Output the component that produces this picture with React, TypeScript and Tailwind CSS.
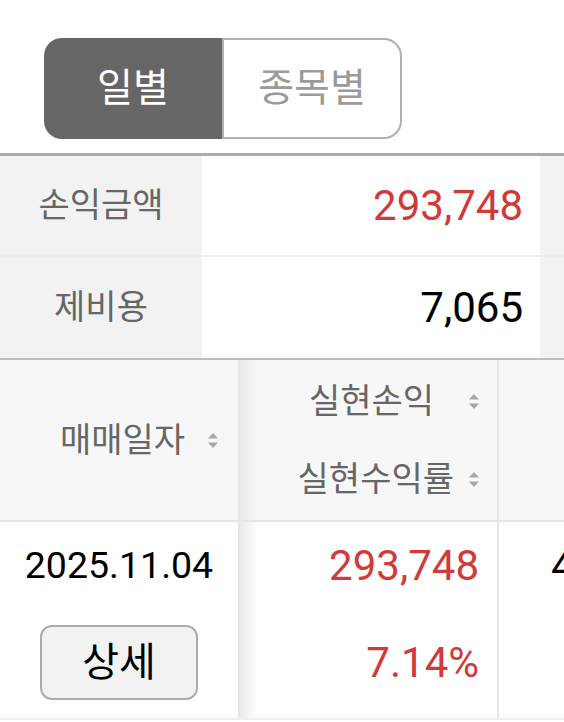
const font = { fontFamily: "Roboto, 'Noto Sans CJK KR', sans-serif" };

function SortIcon() {
  return (
    <svg width="12" height="17" viewBox="0 0 12 17" className="shrink-0">
      <path d="M6 1 L11 6.5 L1 6.5 Z" fill="#a6a6a6" />
      <path d="M1 10.5 L11 10.5 L6 16 Z" fill="#a6a6a6" />
    </svg>
  );
}

export default function App() {
  return (
    <div className="w-[564px] h-[722px] overflow-hidden bg-white" style={font}>
      {/* toggle */}
      <div className="h-[153px] pt-[38px] pl-[44px]">
        <div className="flex h-[101px] w-[358px]">
          <div className="flex w-[178px] items-center justify-center rounded-l-[18px] bg-[#666666] text-[39px] text-white">
            일별
          </div>
          <div className="flex flex-1 items-center justify-center rounded-r-[18px] border-2 border-[#b0b0b0] text-[39px] text-[#9a9a9a]">
            종목별
          </div>
        </div>
      </div>

      {/* summary */}
      <div className="border-t-[3px] border-b-2 border-t-[#ababab] border-b-[#bdbdbd]">
        <div className="grid h-[101px] grid-cols-[202px_338px_24px] border-b-2 border-[#eeeeee]">
          <div className="flex items-center justify-center bg-[#f2f2f2] text-[34px] text-[#666]">손익금액</div>
          <div className="flex items-center justify-end pr-[17px] text-[42px] text-[#d03a3a]">293,748</div>
          <div className="bg-[#f2f2f2]" />
        </div>
        <div className="grid h-[101px] grid-cols-[202px_338px_24px]">
          <div className="flex items-center justify-center bg-[#f2f2f2] text-[34px] text-[#666]">제비용</div>
          <div className="flex items-center justify-end pr-[17px] text-[42px] text-black">7,065</div>
          <div className="bg-[#f2f2f2]" />
        </div>
      </div>

      {/* list header */}
      <div className="grid h-[162px] grid-cols-[240px_259px_1fr] border-b-2 border-[#e6e6e6] bg-[#f7f7f7]">
        <div className="flex items-center justify-end gap-[22px] border-r-2 border-[#e6e6e6] pr-[19px] text-[34px] text-[#666]">
          <span>매매일자</span>
          <SortIcon />
        </div>
        <div className="flex flex-col justify-center border-r-2 border-[#e6e6e6] bg-[linear-gradient(to_right,#e9e9e9,#f7f7f7_18px)] pr-[17px] text-[34px] text-[#666]">
          <div className="flex h-[78px] items-center justify-end gap-[34px]">
            <span>실현손익</span>
            <SortIcon />
          </div>
          <div className="flex h-[78px] items-center justify-end gap-[14px]">
            <span>실현수익률</span>
            <SortIcon />
          </div>
        </div>
        <div />
      </div>

      {/* list row */}
      <div className="grid h-[198px] grid-cols-[240px_259px_1fr] border-b-2 border-[#eeeeee]">
        <div className="flex flex-col items-center border-r-2 border-[#e6e6e6] pt-[20px]">
          <div className="flex h-[46px] items-center text-[37.5px] text-black">2025.11.04</div>
          <button className="mt-[37px] flex h-[75px] w-[158px] items-center justify-center rounded-[12px] border-2 border-[#acacac] bg-[#f2f2f2] text-[40px] text-black">
            상세
          </button>
        </div>
        <div className="flex flex-col items-end border-r-2 border-[#e6e6e6] bg-[linear-gradient(to_right,#ebebeb,#ffffff_18px)] pt-[20px] pr-[18px] text-[42px] text-[#d03a3a]">
          <div className="flex h-[46px] items-center">293,748</div>
          <div className="mt-[51px] flex h-[46px] items-center">7.14%</div>
        </div>
        <div className="overflow-hidden whitespace-nowrap pt-[20px] pl-[52px] text-[42px] text-black">
          <div className="flex h-[46px] items-center">4,114,213</div>
        </div>
      </div>
    </div>
  );
}
